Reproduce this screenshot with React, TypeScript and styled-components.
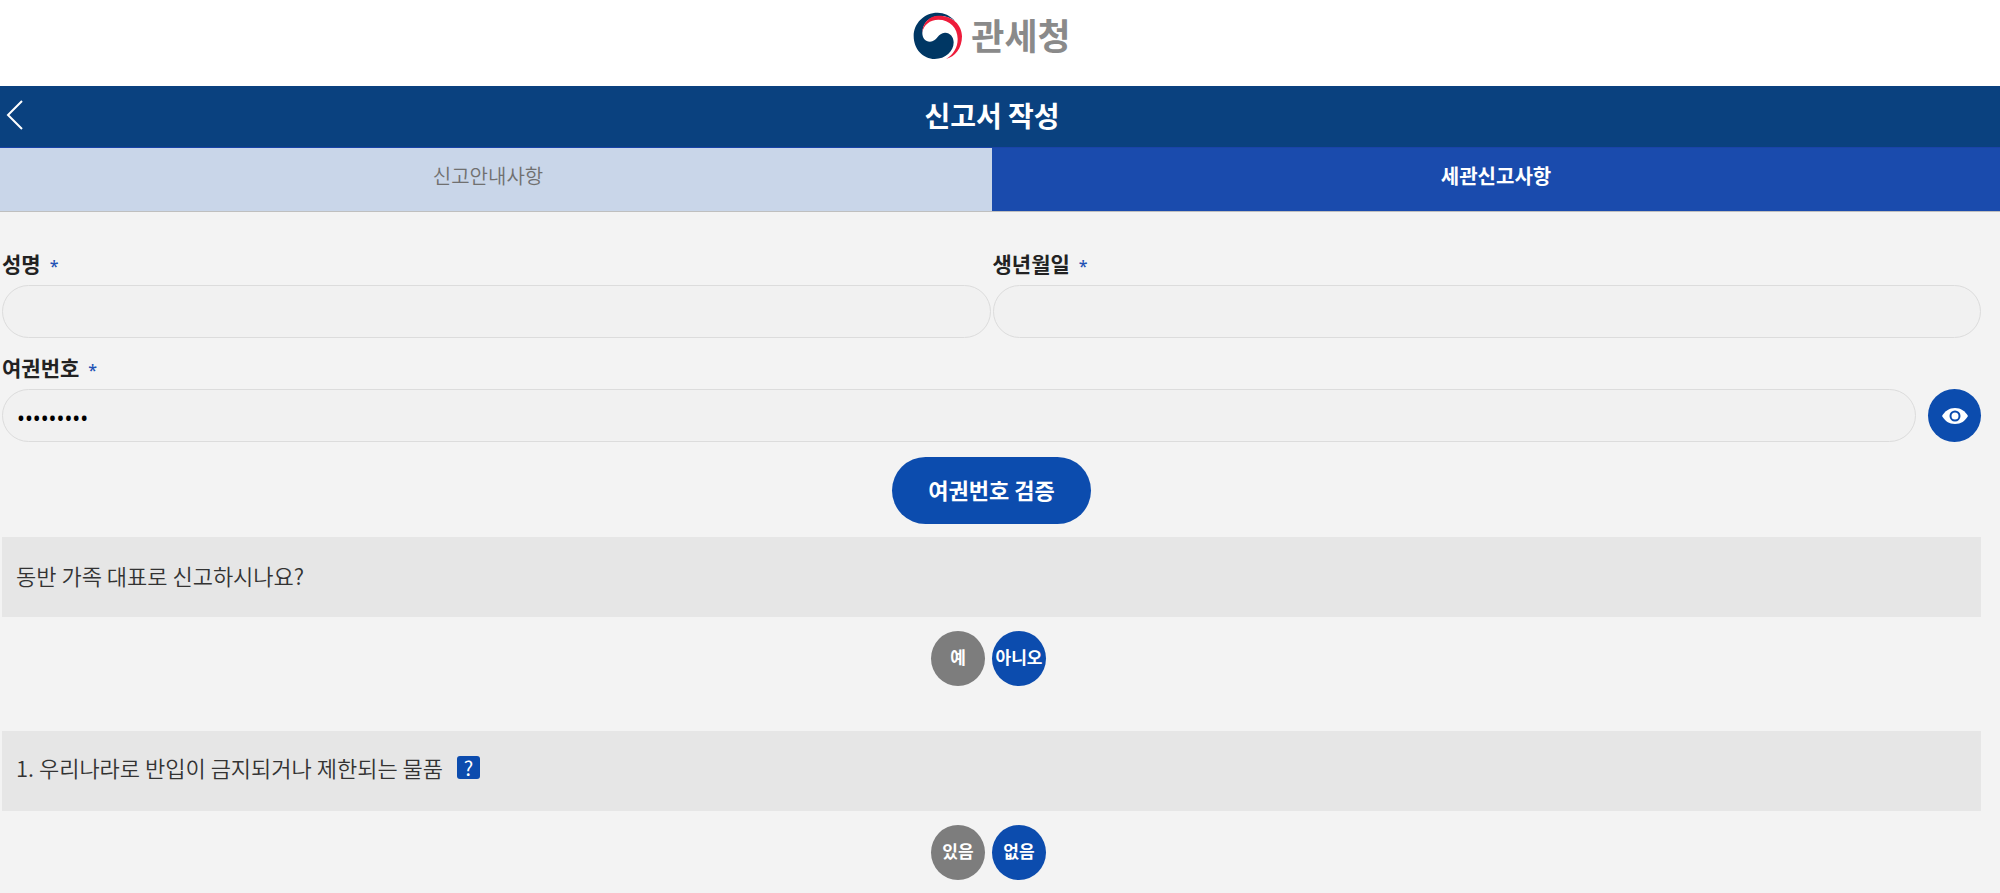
import React, { useState } from "react";
import styled, { createGlobalStyle } from "styled-components";

const GlobalStyle = createGlobalStyle`
  *, *::before, *::after { box-sizing: border-box; }
  body {
    margin: 0;
    background: #f3f3f3;
    color: #222;
    font-family: "Noto Sans CJK KR", "Noto Sans", sans-serif;
    font-size: 21px;
    line-height: 30px;
  }
  button, input { font-family: inherit; }
`;

const Header = styled.header`
  display: flex;
  justify-content: center;
  height: 86px;
  padding: 11px 16px 0 0;
  background: #fff;
`;

const Brand = styled.a`
  display: flex;
  gap: 8px;
  height: 50px;
  color: #8a8a8a;
  font-size: 36px;
  font-weight: 700;
  line-height: 46px;
  text-decoration: none;
`;

const TitleBar = styled.div`
  display: grid;
  grid-template-columns: 48px 1fr 48px;
  align-items: center;
  height: 62px;
  padding: 0 16px 4px 0;
  background: #0a417f;
  border-bottom: 1px solid #1a43a8;
`;

const BackButton = styled.button`
  display: flex;
  padding: 0 0 0 6px;
  border: 0;
  background: none;
  cursor: pointer;
`;

const Title = styled.h1`
  margin: 0;
  color: #fff;
  font-size: 28px;
  font-weight: 700;
  line-height: 40px;
  text-align: center;
`;

const Tabs = styled.nav`
  display: grid;
  grid-template-columns: calc(50% - 8px) 1fr;
  height: 64px;
  border-bottom: 1px solid #bfbfbf;
`;

const Tab = styled.button<{ $active?: boolean }>`
  padding: ${(p) => (p.$active ? "0 0 8px" : "0 16px 8px 0")};
  border: 0;
  background: ${(p) => (p.$active ? "#1a4bad" : "#c9d6e9")};
  color: ${(p) => (p.$active ? "#fff" : "#707070")};
  font-size: 20px;
  font-weight: ${(p) => (p.$active ? 700 : 350)};
  cursor: pointer;
`;

const Form = styled.form`
  padding: 36px 19px 0 2px;
`;

const FieldRow = styled.div`
  display: grid;
  grid-template-columns: 1fr 1fr;
  gap: 2px;
`;

const Field = styled.div`
  margin-bottom: 14px;
`;

const Label = styled.label`
  display: block;
  height: 37px;
  font-weight: 700;
`;

const Required = styled.span`
  margin-left: 9px;
  color: #2352b4;
  font-family: "Noto Sans", sans-serif;
  font-size: 16px;
  font-weight: 500;
`;

const TextInput = styled.input`
  display: block;
  width: 100%;
  min-width: 0;
  height: 53px;
  padding: 5px 14px 0;
  border: 1px solid #dcdcdc;
  border-radius: 27px;
  background: #f1f1f1;
  color: #000;
  font-size: 21px;
  &[type="password"] { font-family: "Noto Sans", sans-serif; }
`;

const InputGroup = styled.div`
  display: flex;
  gap: 12px;
`;

const EyeButton = styled.button`
  display: flex;
  flex: none;
  align-items: center;
  justify-content: center;
  width: 53px;
  height: 53px;
  padding: 0;
  border: 0;
  border-radius: 50%;
  background: #0c4cae;
  cursor: pointer;
`;

const VerifyButton = styled.button`
  display: block;
  height: 67px;
  margin: 15px auto 13px;
  padding: 0 36px 4px;
  border: 0;
  border-radius: 34px;
  background: #0c4cae;
  color: #fff;
  font-size: 22px;
  font-weight: 700;
  cursor: pointer;
`;

const Question = styled.fieldset`
  min-width: 0;
  margin: 0 0 45px;
  padding: 0;
  border: 0;
`;

const QuestionTitle = styled.legend<{ $hint?: boolean }>`
  display: flex;
  align-items: center;
  gap: 14px;
  width: 100%;
  height: 80px;
  margin-bottom: 14px;
  padding: ${(p) => (p.$hint ? "0 14px 8px" : "0 14px 4px")};
  background: #e6e6e6;
  color: #333;
  font-size: 22px;
  font-weight: 350;
`;

const HelpButton = styled.button`
  width: 23px;
  height: 23px;
  padding: 0;
  border: 0;
  border-radius: 3px;
  background: #0c4cae;
  color: #fff;
  font-size: 20px;
  line-height: 23px;
  cursor: pointer;
`;

const Answers = styled.div`
  display: flex;
  justify-content: center;
  gap: 7px;
  padding-right: 6px;
`;

const Answer = styled.button<{ $selected: boolean }>`
  width: 54px;
  height: 55px;
  padding: 0 0 5px;
  border: 0;
  border-radius: 50%;
  background: ${(p) => (p.$selected ? "#0c4cae" : "#7d7d7d")};
  color: #fff;
  font-size: 17px;
  font-weight: 700;
  white-space: nowrap;
  cursor: pointer;
`;

function Emblem() {
  return (
    <svg width="50" height="48" viewBox="98 33 150 144" aria-hidden="true">
      <path
        fill="#003764"
        d="M224 63C209 46 191 38 172 38C131 38 100 70 100 108C100 148 129 177 163 177C195 177 220 155 220 127C220 110 209 99 195 98C173 97 170 125 149 125C135 125 126 114 126 99C126 69 148 49 174 48C193 47 210 52 224 63Z"
      />
      <path
        fill="#ee1c3b"
        d="M126 98C126 69 148 47 174 47C214 46 245 73 245 109C245 145 224 171 197 177C219 164 232 143 232 117C232 83 208 59 174 59C149 59 129 75 126 98Z"
      />
    </svg>
  );
}

function AnswerPair({ options }: { options: [string, string] }) {
  const [selected, setSelected] = useState(options[1]);
  return (
    <Answers>
      {options.map((option) => (
        <Answer
          key={option}
          type="button"
          $selected={selected === option}
          aria-pressed={selected === option}
          onClick={() => setSelected(option)}
        >
          {option}
        </Answer>
      ))}
    </Answers>
  );
}

export default function App() {
  const [visible, setVisible] = useState(false);
  return (
    <>
      <GlobalStyle />
      <Header>
        <Brand href="#">
          <Emblem />
          관세청
        </Brand>
      </Header>
      <TitleBar>
        <BackButton type="button" aria-label="이전">
          <svg width="18" height="34" viewBox="0 0 18 34" fill="none" stroke="#fff" strokeWidth="2">
            <path d="M16 3L2 17L16 31" />
          </svg>
        </BackButton>
        <Title>신고서 작성</Title>
      </TitleBar>
      <Tabs>
        <Tab type="button">신고안내사항</Tab>
        <Tab type="button" $active>
          세관신고사항
        </Tab>
      </Tabs>
      <Form onSubmit={(e) => e.preventDefault()}>
        <FieldRow>
          <Field>
            <Label htmlFor="name">
              성명<Required>*</Required>
            </Label>
            <TextInput id="name" type="text" />
          </Field>
          <Field>
            <Label htmlFor="birth">
              생년월일<Required>*</Required>
            </Label>
            <TextInput id="birth" type="text" />
          </Field>
        </FieldRow>
        <Field>
          <Label htmlFor="passport">
            여권번호<Required>*</Required>
          </Label>
          <InputGroup>
            <TextInput id="passport" type={visible ? "text" : "password"} defaultValue="M12345678" />
            <EyeButton type="button" aria-label="여권번호 표시" onClick={() => setVisible(!visible)}>
              <svg width="26" height="16" viewBox="0 0 26 16" aria-hidden="true">
                <path fill="#fff" d="M0 8C3 3 7 0 13 0S23 3 26 8C23 13 19 16 13 16S3 13 0 8Z" />
                <circle cx="13" cy="8" r="4.5" fill="#fff" stroke="#0c4cae" strokeWidth="2" />
              </svg>
            </EyeButton>
          </InputGroup>
        </Field>
        <VerifyButton type="button">여권번호 검증</VerifyButton>
        <Question>
          <QuestionTitle>동반 가족 대표로 신고하시나요?</QuestionTitle>
          <AnswerPair options={["예", "아니오"]} />
        </Question>
        <Question>
          <QuestionTitle $hint>
            1. 우리나라로 반입이 금지되거나 제한되는 물품
            <HelpButton type="button">?</HelpButton>
          </QuestionTitle>
          <AnswerPair options={["있음", "없음"]} />
        </Question>
      </Form>
    </>
  );
}
